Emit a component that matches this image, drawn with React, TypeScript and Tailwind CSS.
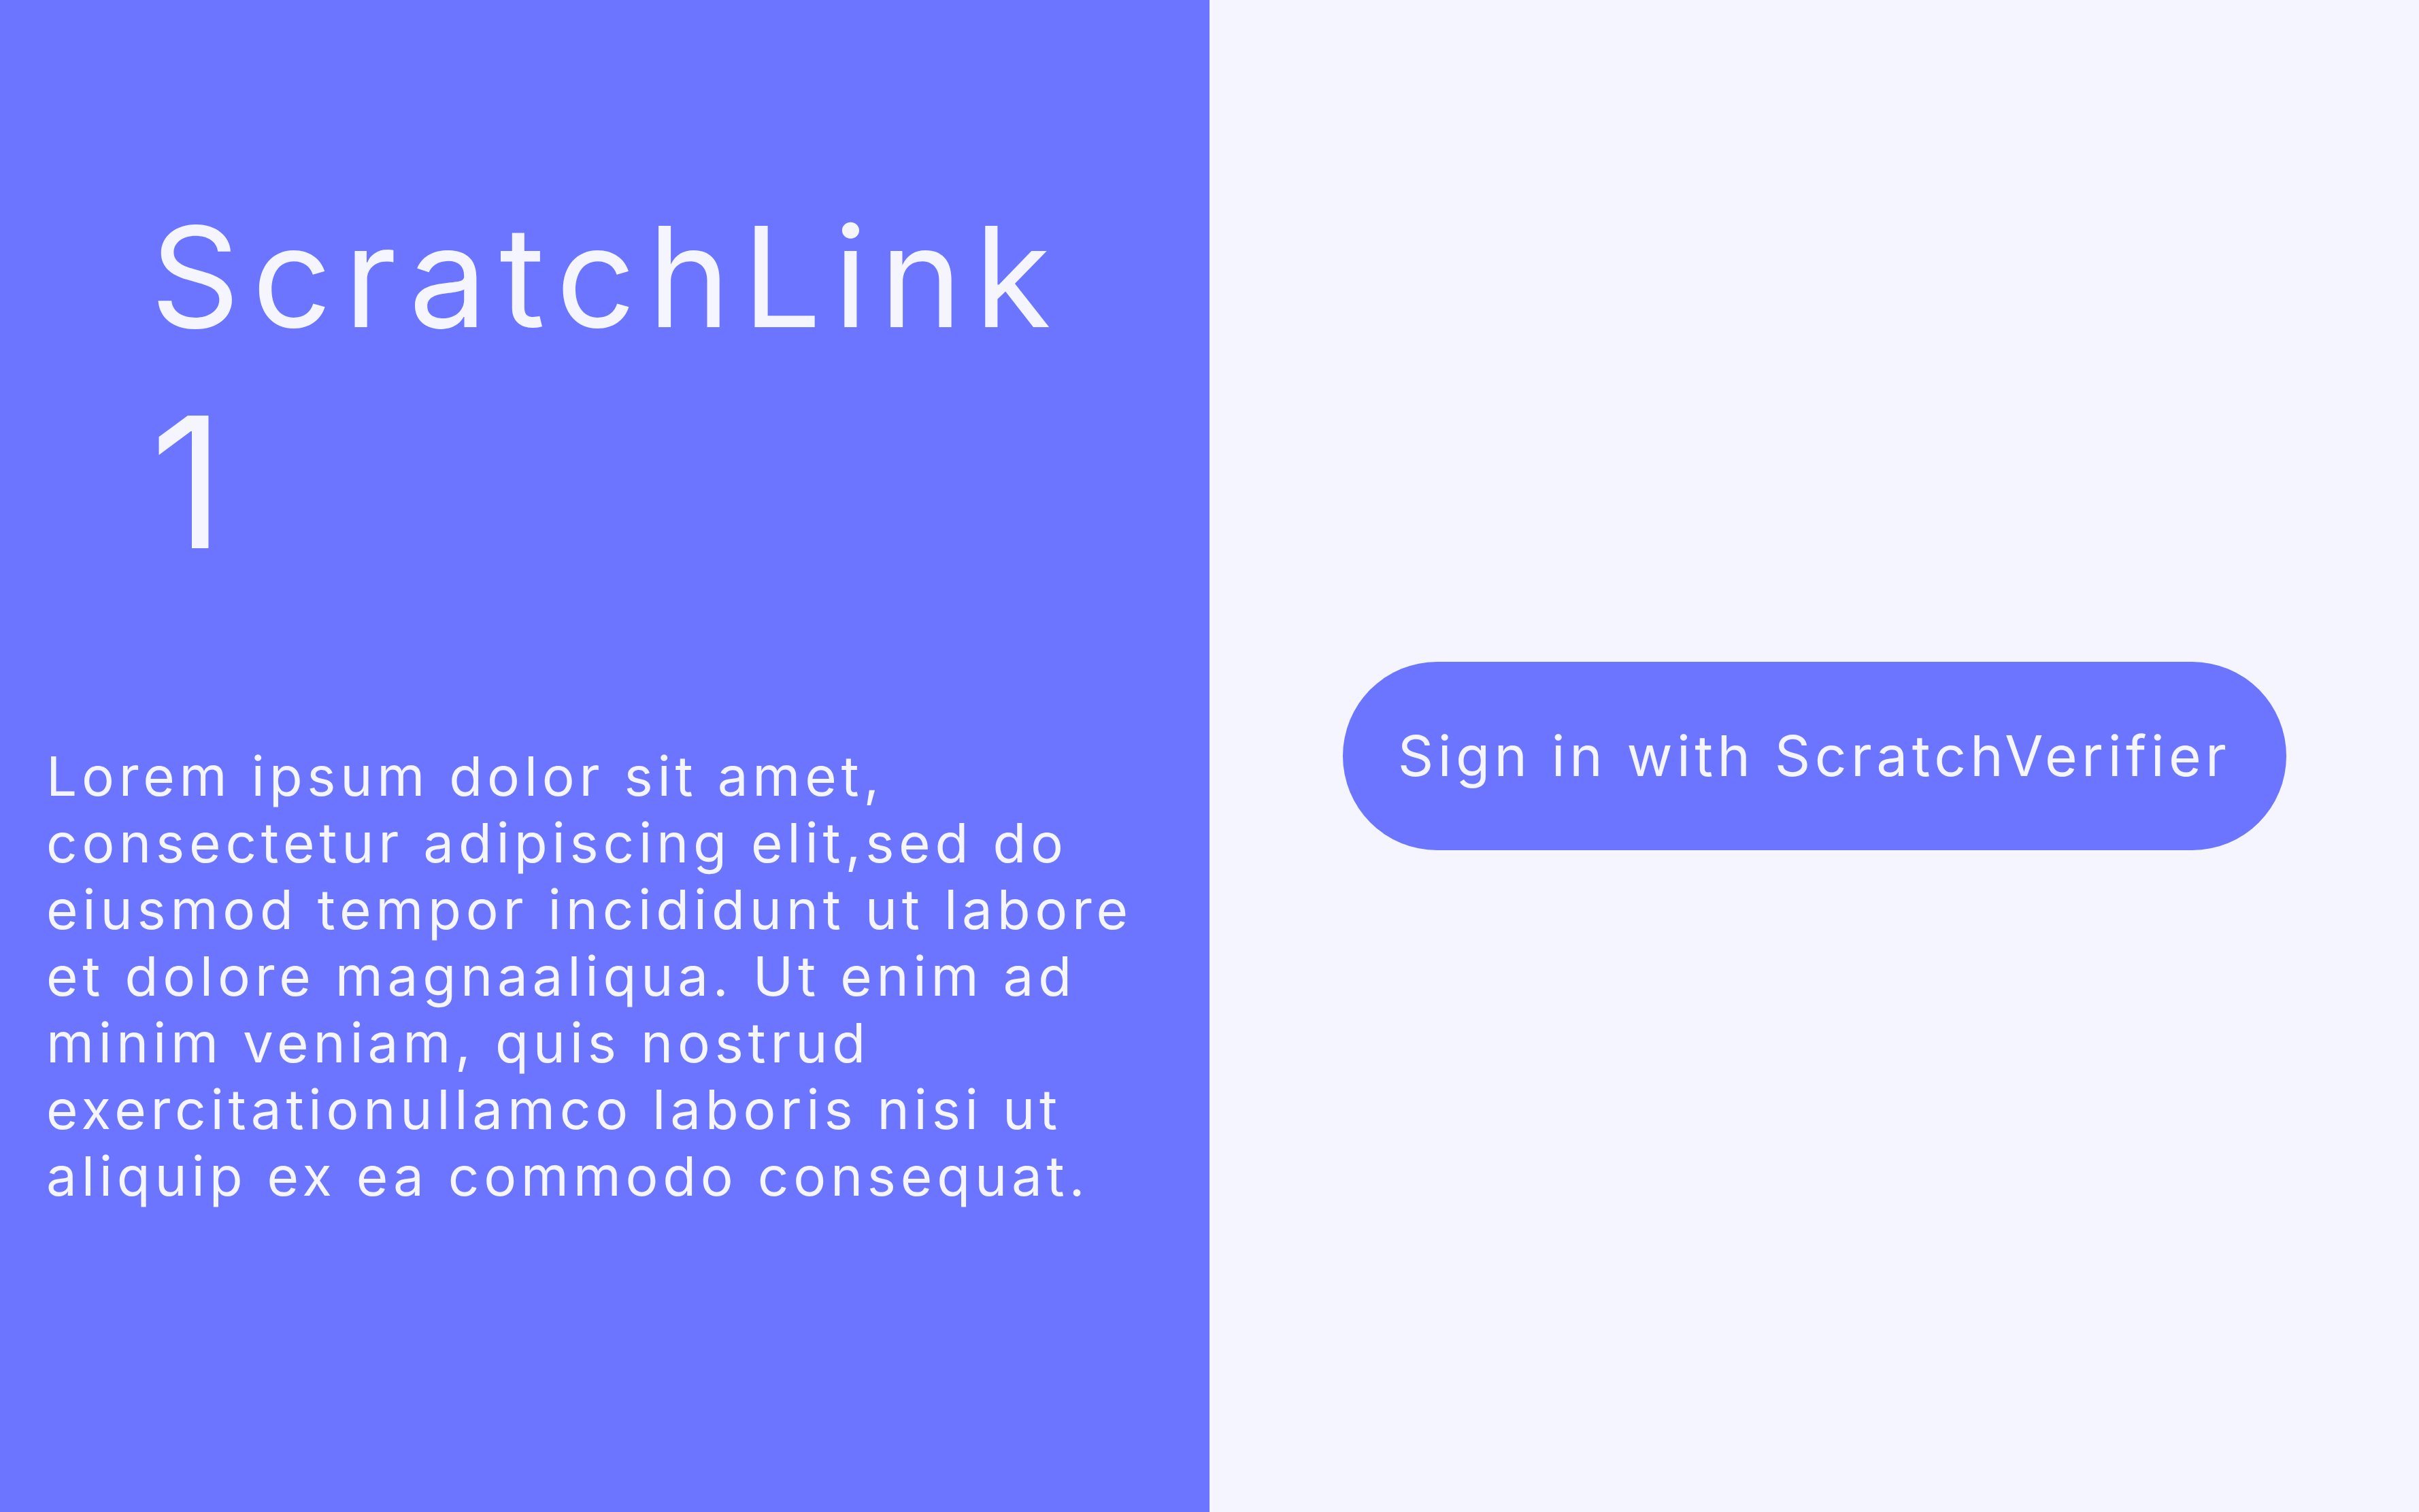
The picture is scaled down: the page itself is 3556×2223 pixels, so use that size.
import React from "react";

export default function App() {
  const font = { fontFamily: "Inter, 'Noto Sans', sans-serif" };
  return (
    <div className="flex h-[2223px] w-full bg-[#f5f5ff]" style={font}>
      <div className="flex w-1/2 flex-col bg-[#6b75ff] text-[#f5f5ff]">
        <h1 className="ml-[221px] mt-[304px] text-[205px] font-normal leading-none tracking-[0.088em]">
          ScratchLink
        </h1>
        <div className="ml-[221px] mt-[66px] text-[268px] font-normal leading-none">1</div>
        <p className="ml-[68px] mt-[249px] text-[80px] leading-[98px] tracking-[0.084em] whitespace-nowrap">
          Lorem ipsum dolor sit amet,
          <br />
          consectetur adipiscing elit,sed do
          <br />
          eiusmod tempor incididunt ut labore
          <br />
          et dolore magnaaliqua. Ut enim ad
          <br />
          minim veniam, quis nostrud
          <br />
          exercitationullamco laboris nisi ut
          <br />
          aliquip ex ea commodo consequat.
        </p>
      </div>
      <div className="flex w-1/2 items-center justify-center">
        <button className="flex h-[277px] w-[1387px] items-center justify-center rounded-full bg-[#6b75ff] text-[82px] tracking-[0.078em] text-[#f5f5ff]">
          Sign in with ScratchVerifier
        </button>
      </div>
    </div>
  );
}
